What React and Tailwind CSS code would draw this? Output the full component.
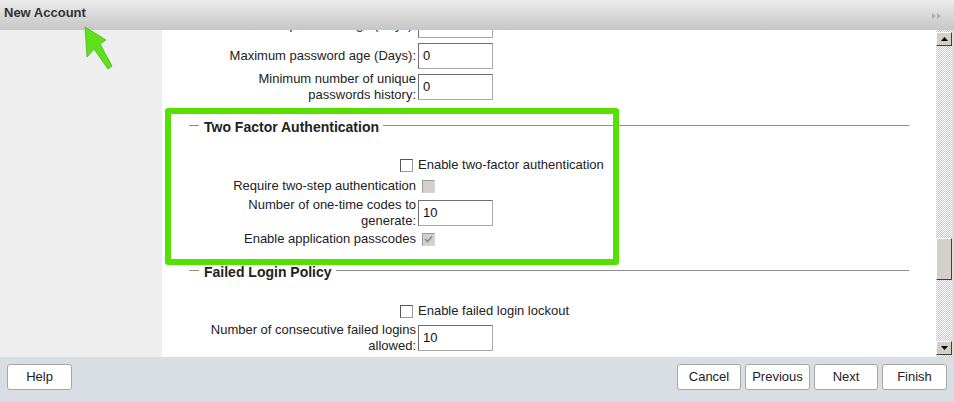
import React from 'react';

function Row({ label, children, className = '' }) {
  return (
    <div className={`flex items-center ${className}`}>
      <div className="w-[254px] shrink-0 text-right leading-[16px]">{label}</div>
      <div className="ml-[2px] flex items-center">{children}</div>
    </div>
  );
}

function TextBox({ value }) {
  return (
    <div className="w-[75px] h-[26px] border border-[#a9a9a9] border-t-[#6f6f6f] border-l-[#6f6f6f] bg-white flex items-center pl-[4px] text-[13px] text-[#111]">
      {value}
    </div>
  );
}

function Check({ disabled, checked }) {
  return (
    <span
      className={`w-[13px] h-[13px] border flex items-center justify-center ${
        disabled ? 'bg-[#d4d0c8] border-[#9a9a9a] border-b-[#d8d8d8] border-r-[#d8d8d8]' : 'bg-white border-[#555] border-b-[#9a9a9a] border-r-[#9a9a9a]'
      }`}
    >
      {checked && (
        <svg width="9" height="8" viewBox="0 0 9 8">
          <path d="M1 4 L3.5 6.5 L8 1.5" fill="none" stroke="#8a8a8a" strokeWidth="1.6" />
        </svg>
      )}
    </span>
  );
}

function Legend({ title, className = '' }) {
  return (
    <div className={`flex items-start h-[16px] ml-[27px] w-[720px] ${className}`}>
      <div className="w-[10px] h-px bg-[#8c8c8c] mt-[6px]" />
      <div className="ml-[5px] mr-[4px] font-bold text-[14px] leading-[16px] text-[#222]">{title}</div>
      <div className="flex-1 h-px bg-[#8c8c8c] mt-[6px]" />
    </div>
  );
}

function Btn({ children, w }) {
  return (
    <button className={`${w} h-[26px] rounded-[3px] border border-[#a6a6a6] bg-white text-[13px] text-[#222]`}>
      {children}
    </button>
  );
}

export default function App() {
  return (
    <div className="relative w-[954px] h-[402px] flex flex-col overflow-hidden text-[13px] text-[#222] font-['Liberation_Sans',Arial,sans-serif]">
      <div className="h-[30px] shrink-0 flex items-start justify-between px-[4px] pt-[5px] bg-gradient-to-b from-[#ebebeb] to-[#c6c6c6]">
        <span className="font-bold text-[13px] leading-[16px] text-[#333]">New Account</span>
        <svg width="10" height="6" viewBox="0 0 10 6" className="mt-[8px] mr-[8px]">
          <path d="M0 0 L4 3 L0 6 Z M5 0 L9 3 L5 6 Z" fill="#b0b0b0" />
        </svg>
      </div>

      <div className="h-[327px] flex">
        <div className="w-[162px] shrink-0 bg-[#eeeeee]" />
        <div className="flex-1 bg-white overflow-hidden">
          <div className="-mt-[18px]">
            <Row label="Minimum password age (Days):">
              <TextBox value="0" />
            </Row>
            <Row label="Maximum password age (Days):" className="mt-[5px]">
              <TextBox value="0" />
            </Row>
            <Row label={<>Minimum number of unique<br />passwords history:</>} className="mt-[2px]">
              <TextBox value="0" />
            </Row>

            <Legend title="Two Factor Authentication" className="mt-[16px]" />
            <div className="flex items-center h-[16px] mt-[22px]">
              <div className="w-[254px] shrink-0 flex justify-end pr-[3px]">
                <Check />
              </div>
              <span className="ml-[2px] leading-[16px]">Enable two-factor authentication</span>
            </div>
            <Row label="Require two-step authentication" className="mt-[5px] h-[16px]">
              <span className="ml-[4px]">
                <Check disabled />
              </span>
            </Row>
            <Row label={<>Number of one-time codes to<br />generate:</>} className="mt-[3px]">
              <TextBox value="10" />
            </Row>
            <Row label="Enable application passcodes" className="mt-[2px] h-[16px]">
              <span className="ml-[4px]">
                <Check disabled checked />
              </span>
            </Row>

            <Legend title="Failed Login Policy" className="mt-[17px]" />
            <div className="flex items-center h-[16px] mt-[23px]">
              <div className="w-[254px] shrink-0 flex justify-end pr-[3px]">
                <Check />
              </div>
              <span className="ml-[2px] leading-[16px]">Enable failed login lockout</span>
            </div>
            <Row label={<>Number of consecutive failed logins<br />allowed:</>} className="mt-[3px]">
              <TextBox value="10" />
            </Row>
            <Row label="" className="mt-[4px]">
              <TextBox value="" />
            </Row>
          </div>
        </div>

        <div className="w-[16px] shrink-0 flex flex-col bg-[image:repeating-conic-gradient(#c8c8c8_0_25%,#ffffff_0_50%)] bg-[length:2px_2px]">
          <div className="h-[14px] mt-[2px] bg-[#d4d0c8] border border-white border-r-[#404040] border-b-[#404040] flex items-center justify-center">
            <svg width="7" height="4" viewBox="0 0 7 4"><path d="M0 4 L3.5 0 L7 4 Z" fill="#000" /></svg>
          </div>
          <div className="h-[42px] mt-[192px] bg-[#d4d0c8] border border-white border-r-[#404040] border-b-[#404040]" />
          <div className="h-[14px] mt-auto mb-[2px] bg-[#d4d0c8] border border-white border-r-[#404040] border-b-[#404040] flex items-center justify-center">
            <svg width="7" height="4" viewBox="0 0 7 4"><path d="M0 0 L3.5 4 L7 0 Z" fill="#000" /></svg>
          </div>
        </div>
        <div className="w-[2px] shrink-0 bg-[#dcdcdc]" />
      </div>

      <div className="h-[45px] shrink-0 bg-[#d9dde4] flex items-start justify-between pt-[7px] px-[7px]">
        <Btn w="w-[65px]">Help</Btn>
        <div className="flex gap-[4px]">
          <Btn w="w-[64px]">Cancel</Btn>
          <Btn w="w-[65px]">Previous</Btn>
          <Btn w="w-[64px]">Next</Btn>
          <Btn w="w-[65px]">Finish</Btn>
        </div>
      </div>

      <div className="absolute left-[165px] top-[108px] w-[454px] h-[157px] border-[6px] border-[#55e000] rounded-[3px] pointer-events-none" />

      <svg className="absolute left-0 top-0 pointer-events-none" width="954" height="402">
        <polygon
          points="85,27 106,40 100,44 112,66 108,69 94,49 87,57"
          fill="#5ee01a"
          stroke="#46b810"
          strokeWidth="0.8"
          strokeLinejoin="round"
        />
      </svg>
    </div>
  );
}
